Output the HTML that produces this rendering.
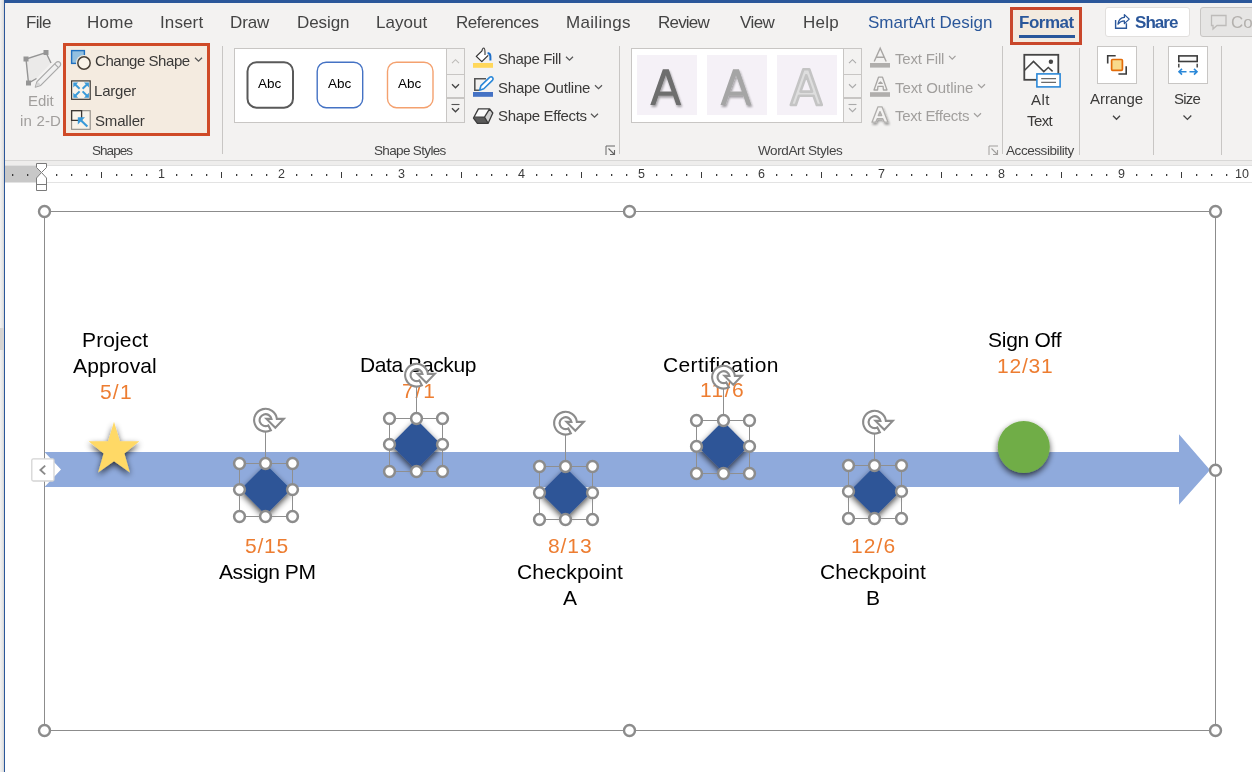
<!DOCTYPE html>
<html><head><meta charset="utf-8">
<style>
*{margin:0;padding:0;box-sizing:border-box}
html,body{width:1252px;height:772px;overflow:hidden;background:#fff;font-family:"Liberation Sans",sans-serif}
.a{position:absolute}
.t{position:absolute;white-space:nowrap;line-height:1;font-family:"Liberation Sans",sans-serif;will-change:transform}
svg{position:absolute;left:0;top:0}
</style></head><body>
<div class="a" style="left:0px;top:0px;width:4px;height:772px;background:#efefef;background:linear-gradient(to right,#f2f2f2,#e6e6e6 60%,#d4d4d4)"></div>
<div class="a" style="left:0px;top:328px;width:4px;height:22px;background:#d6d4d2;"></div>
<div class="a" style="left:5px;top:3px;width:1247px;height:157px;background:#f3f2f1;"></div>
<div class="a" style="left:4px;top:0px;width:1248px;height:3px;background:#2b579a;"></div>
<div class="a" style="left:4px;top:0px;width:1px;height:772px;background:#2b579a;"></div>
<div class="t" style="left:25.50px;top:13.55px;font-size:17px;color:#444;font-weight:normal;letter-spacing:-0.646px">File</div>
<div class="t" style="left:86.60px;top:13.55px;font-size:17px;color:#444;font-weight:normal;letter-spacing:0.302px">Home</div>
<div class="t" style="left:160.10px;top:13.55px;font-size:17px;color:#444;font-weight:normal;letter-spacing:0.121px">Insert</div>
<div class="t" style="left:230.00px;top:13.55px;font-size:17px;color:#444;font-weight:normal;letter-spacing:-0.098px">Draw</div>
<div class="t" style="left:297.20px;top:13.55px;font-size:17px;color:#444;font-weight:normal;letter-spacing:-0.093px">Design</div>
<div class="t" style="left:376.20px;top:13.55px;font-size:17px;color:#444;font-weight:normal;letter-spacing:0.016px">Layout</div>
<div class="t" style="left:456.30px;top:13.55px;font-size:17px;color:#444;font-weight:normal;letter-spacing:-0.448px">References</div>
<div class="t" style="left:566.00px;top:13.55px;font-size:17px;color:#444;font-weight:normal;letter-spacing:0.306px">Mailings</div>
<div class="t" style="left:658.30px;top:13.55px;font-size:17px;color:#444;font-weight:normal;letter-spacing:-0.793px">Review</div>
<div class="t" style="left:740.40px;top:13.55px;font-size:17px;color:#444;font-weight:normal;letter-spacing:-0.588px">View</div>
<div class="t" style="left:803.20px;top:13.55px;font-size:17px;color:#444;font-weight:normal;letter-spacing:0.231px">Help</div>
<div class="t" style="left:867.60px;top:13.55px;font-size:17px;color:#2b579a;font-weight:normal;letter-spacing:-0.025px">SmartArt Design</div>
<div class="a" style="left:1010px;top:7px;width:72px;height:38px;border:3px solid #c9472b;background:#f3eadf"></div>
<div class="t" style="left:1018.50px;top:13.55px;font-size:17px;color:#2b579a;font-weight:bold;letter-spacing:-0.491px">Format</div>
<div class="a" style="left:1019px;top:35px;width:56px;height:3px;background:#2b579a;"></div>
<div class="a" style="left:1105px;top:7px;width:85px;height:30px;border:1px solid #e1dfdd;border-radius:3px;background:#fff"></div>
<div class="t" style="left:1135.00px;top:13.55px;font-size:17px;color:#2b579a;font-weight:bold;letter-spacing:-0.948px">Share</div>
<div class="a" style="left:1200px;top:7px;width:60px;height:30px;border:1px solid #c8c6c4;border-radius:3px;background:#e6e5e4"></div>
<div class="t" style="left:1230.50px;top:13.55px;font-size:17px;color:#b3b0ad;font-weight:normal;letter-spacing:0.000px">Co</div>
<svg width="1252" height="772" style="position:absolute;left:0;top:0"><line x1="222.5" y1="46" x2="222.5" y2="154" stroke="#c8c6c4" stroke-width="1"/><line x1="619.5" y1="46" x2="619.5" y2="154" stroke="#c8c6c4" stroke-width="1"/><line x1="1002.5" y1="46" x2="1002.5" y2="154" stroke="#c8c6c4" stroke-width="1"/><line x1="1079.5" y1="48" x2="1079.5" y2="155" stroke="#c8c6c4" stroke-width="1"/><line x1="1153.5" y1="46" x2="1153.5" y2="155" stroke="#c8c6c4" stroke-width="1"/><line x1="1221.5" y1="46" x2="1221.5" y2="155" stroke="#c8c6c4" stroke-width="1"/><polygon points="26,59 46,52.5 51,63 36.5,78.5 28.5,83" fill="#ebeae9"/><polyline points="51,63 46,52.5 26,59 28.5,83 36.5,78.5" fill="none" stroke="#959595" stroke-width="1.4"/><rect x="23.5" y="56.5" width="5" height="5" fill="#959595"/><rect x="43.5" y="50.0" width="5" height="5" fill="#959595"/><rect x="26.0" y="80.5" width="5" height="5" fill="#959595"/><path d="M35.3,87.1 L37,81.6 L56.2,62.4 A2.6,2.6 0 0 1 59.9,66.1 L40.7,85.4 Z" fill="#f0f0f0" stroke="#a8a8a8" stroke-width="1.2" stroke-linejoin="round"/><path d="M54.7,63.9 L58.4,67.6" stroke="#a8a8a8" stroke-width="1.1"/><path d="M35.6,86.8 L37.2,82 Q39.8,82.6 40.4,85.2 Z" fill="#d6d6d6"/><rect x="64.5" y="44.5" width="144" height="90" fill="#f4ebe0" stroke="#cf4a27" stroke-width="3"/><rect x="71.6" y="50.6" width="12.8" height="12.8" fill="#93c0e0" stroke="#1f6fbf" stroke-width="1.4"/><circle cx="84" cy="63" r="8" fill="#f4ebe0"/><circle cx="84" cy="63" r="6.2" fill="#faf4ea" stroke="#4a4238" stroke-width="1.5"/><polyline points="195,57.75 198.5,61.25 202,57.75" fill="none" stroke="#555" stroke-width="1.2"/><rect x="71.6" y="80.9" width="18.6" height="18.4" fill="#f9f3ea" stroke="#3c3835" stroke-width="1.2"/><path d="M73.3,82.5 H78.2 L73.3,87.4 Z M88.9,82.5 H84 L88.9,87.4 Z M73.3,97.7 H78.2 L73.3,92.8 Z M88.9,97.7 H84 L88.9,92.8 Z" fill="#3a9ad9"/><path d="M75,84.2 L79.6,88.8 M87.2,84.2 L82.6,88.8 M75,96 L79.6,91.4 M87.2,96 L82.6,91.4" stroke="#3a9ad9" stroke-width="2"/><rect x="71.6" y="110.7" width="18.6" height="18.6" fill="#f9f3ea" stroke="#8f8a85" stroke-width="1.1"/><path d="M71.6,120.3 H81.6 V110.7 H71.6 Z" fill="none" stroke="#3c3835" stroke-width="1.3"/><path d="M77.8,117.2 H85 L77.8,124.4 Z" fill="#3a9ad9"/><line x1="80" y1="119.4" x2="87.4" y2="126.6" stroke="#3a9ad9" stroke-width="2.1"/><rect x="234.5" y="48.5" width="230" height="74" fill="#fff" stroke="#c8c6c4" stroke-width="1"/><rect x="446.5" y="48.5" width="18" height="74" fill="#f3f2f1" stroke="#c8c6c4" stroke-width="1"/><rect x="446.5" y="74.5" width="18" height="23" fill="#f3f2f1" stroke="#c8c6c4" stroke-width="1"/><rect x="446.5" y="98.5" width="18" height="24" fill="#f3f2f1" stroke="#c8c6c4" stroke-width="1"/><polyline points="452,63.2 455.5,59.7 459,63.2" fill="none" stroke="#bdbbb9" stroke-width="1.1"/><polyline points="452,84.25 455.5,87.75 459,84.25" fill="none" stroke="#444" stroke-width="1.3"/><line x1="451.5" y1="104.5" x2="459.5" y2="104.5" stroke="#555" stroke-width="1.1"/><polyline points="452,108.25 455.5,111.75 459,108.25" fill="none" stroke="#444" stroke-width="1.3"/><rect x="247.5" y="62.2" width="45.5" height="45.5" rx="9" fill="#fff" stroke="#595959" stroke-width="2"/><rect x="317.2" y="62.2" width="45.5" height="45.5" rx="9" fill="#fff" stroke="#4472c4" stroke-width="1.4"/><rect x="387.5" y="62.2" width="45.5" height="45.5" rx="9" fill="#fff" stroke="#f4a16f" stroke-width="1.4"/><path d="M482,51 L488.2,55.4 L481.8,61.6 L476.3,56.4 Z" fill="#fff"/><path d="M482,50.9 L476.3,56.4 L481.8,61.6 L488.2,55.4" fill="none" stroke="#333" stroke-width="1.3" stroke-linejoin="round"/><path d="M482,51 Q482.3,48 483.8,48 Q485.2,48.2 485,55" fill="none" stroke="#444" stroke-width="1.2"/><path d="M487.6,52.9 Q490.4,53.2 490.4,56.5 L490.4,60.5" fill="none" stroke="#1e6fc9" stroke-width="2"/><rect x="473" y="63" width="20" height="4.8" fill="#ffd75a"/><path d="M486,78.8 H474.8 V90.2 H480" fill="none" stroke="#555" stroke-width="1.6"/><path d="M479.6,90.2 L481,85.6 L489.6,77.4 Q491.2,76 492.6,77.6 Q493.8,79 492.4,80.4 L483.8,88.8 Z" fill="#fff" stroke="#2b88d8" stroke-width="1.6" stroke-linejoin="round"/><rect x="473" y="92" width="20" height="4.8" fill="#4472c4"/><path d="M478.4,108.9 H489.6 L484.5,116.9 H473.8 Z" fill="#fafafa"/><path d="M473.6,117.6 L484.5,116.9 L488.2,123.3 H477.4 Z" fill="#5a5a5a"/><path d="M484.5,116.9 L489.6,108.9 L492.8,113 L488.2,123.3 Z" fill="#cfcfcf"/><path d="M473.5,118 L478.4,108.9 H489.6 L492.8,113 L488.2,123.3 H477.4 Z M473.8,117.2 H484.5 L489.6,108.9 M484.5,117.2 L488.2,123.3" fill="none" stroke="#3c3c3c" stroke-width="1.3" stroke-linejoin="round"/><polyline points="566,56.75 569.5,60.25 573,56.75" fill="none" stroke="#555" stroke-width="1.2"/><polyline points="595,85.25 598.5,88.75 602,85.25" fill="none" stroke="#555" stroke-width="1.2"/><polyline points="591,113.75 594.5,117.25 598,113.75" fill="none" stroke="#555" stroke-width="1.2"/><path d="M606.0,155.0 V146.0 H615.0" fill="none" stroke="#666" stroke-width="1"/><path d="M608.5,148.5 L614.5,154.5 M614.5,150.0 V154.5 H610.0" fill="none" stroke="#666" stroke-width="1.1"/><rect x="631.5" y="48.5" width="230" height="74" fill="#fff" stroke="#c8c6c4" stroke-width="1"/><rect x="843.5" y="48.5" width="18" height="74" fill="#f3f2f1" stroke="#c8c6c4" stroke-width="1"/><rect x="843.5" y="74.5" width="18" height="23" fill="#f3f2f1" stroke="#c8c6c4" stroke-width="1"/><rect x="843.5" y="98.5" width="18" height="24" fill="#f3f2f1" stroke="#c8c6c4" stroke-width="1"/><polyline points="849,63.2 852.5,59.7 856,63.2" fill="none" stroke="#aaa" stroke-width="1.1"/><polyline points="849,84.25 852.5,87.75 856,84.25" fill="none" stroke="#aaa" stroke-width="1.1"/><line x1="848.5" y1="104.5" x2="856.5" y2="104.5" stroke="#aaa" stroke-width="1.1"/><polyline points="849,108.25 852.5,111.75 856,108.25" fill="none" stroke="#aaa" stroke-width="1.1"/><rect x="637" y="55" width="60" height="60" fill="#f5f1f7"/><rect x="707" y="55" width="60" height="60" fill="#f5f1f7"/><rect x="777" y="55" width="60" height="60" fill="#f5f1f7"/><defs><filter id="ash" x="-30%" y="-30%" width="160%" height="160%"><feGaussianBlur in="SourceAlpha" stdDeviation="1.2"/><feOffset dx="0.5" dy="1.5" result="b"/><feComponentTransfer><feFuncA type="linear" slope="0.35"/></feComponentTransfer><feMerge><feMergeNode/><feMergeNode in="SourceGraphic"/></feMerge></filter></defs><path d="M650.3,105 L662.8499999999999,69.3 H668.75 L681.3,105 H676.3 L673.05,95.8 H658.5 L655.3,105 Z M659.9499999999999,91.6 H671.5999999999999 L665.8,75.3 Z" fill="#6e6e6e" fill-rule="evenodd" filter="url(#ash)"/><path d="M720.5,105 L733.05,69.3 H738.95 L751.5,105 H746.5 L743.25,95.8 H728.7 L725.5,105 Z M730.15,91.6 H741.8 L736,75.3 Z" fill="#a5a5a5" fill-rule="evenodd" filter="url(#ash)"/><path d="M790.8,105 L803.3499999999999,69.3 H809.25 L821.8,105 H816.8 L813.55,95.8 H799.0 L795.8,105 Z M800.4499999999999,91.6 H812.0999999999999 L806.3,75.3 Z" fill="#dedede" stroke="#c4c4c4" stroke-width="2.6" stroke-linejoin="round" fill-rule="evenodd"/><path d="M874.2,61.5 L880.2,48.2 L886.2,61.5 M876.6,57.3 H883.8000000000001" fill="none" stroke="#a8a6a4" stroke-width="1.4"/><rect x="870" y="63" width="20" height="4.6" fill="#b0aeac"/><path d="M874.0,90 L878.5,77.2 H882.5 L887.0,90 H883.4 L883.1,86.4 H877.9 L877.6,90 Z M878.8,83.4 H882.2 L880.5,82.0 Z" fill="#f3f2f1" stroke="#a8a6a4" stroke-width="1.3" fill-rule="evenodd" stroke-linejoin="round"/><rect x="870" y="92.2" width="20" height="4.6" fill="#b0aeac"/><g filter="url(#ash)"><path d="M872,122.2 L878,106.8 H882 L888,122.2 H884.4 L882.6,118.60000000000001 H877.4 L875.6,122.2 Z M878.3,115.60000000000001 H881.7 L880,111.6 Z" fill="#f3f2f1" stroke="#b0aeac" stroke-width="1.3" fill-rule="evenodd" stroke-linejoin="round"/></g><polyline points="949,55.875 952.25,59.125 955.5,55.875" fill="none" stroke="#a19f9d" stroke-width="1.2"/><polyline points="978,84.25 981.5,87.75 985,84.25" fill="none" stroke="#a19f9d" stroke-width="1.2"/><polyline points="974,113.25 977.5,116.75 981,113.25" fill="none" stroke="#a19f9d" stroke-width="1.2"/><path d="M989.0,155.0 V146.0 H998.0" fill="none" stroke="#a19f9d" stroke-width="1"/><path d="M991.5,148.5 L997.5,154.5 M997.5,150.0 V154.5 H993.0" fill="none" stroke="#a19f9d" stroke-width="1.1"/><rect x="1024.3" y="54.8" width="34" height="25" fill="#fcfcfc" stroke="#454545" stroke-width="1.8"/><polyline points="1024.4,70.5 1033.5,61.4 1043.8,71.6 1048.3,67.5 1052.6,71.4" fill="none" stroke="#454545" stroke-width="1.5"/><circle cx="1050.9" cy="61.7" r="2.2" fill="#454545"/><rect x="1036.9" y="73.9" width="23.2" height="13" fill="#fff" stroke="#2b88d8" stroke-width="1.6"/><path d="M1041.2,78.6 H1056 M1041.2,82.3 H1056" stroke="#6a6a6a" stroke-width="1.2"/><rect x="1097.5" y="46.5" width="39" height="37" fill="#fff" stroke="#c8c6c4" stroke-width="1"/><path d="M1107.7,63.5 V55.7 H1115.7" fill="none" stroke="#3c3c3c" stroke-width="1.6"/><path d="M1118.4,74 H1126.2 V66.2" fill="none" stroke="#3c3c3c" stroke-width="1.6"/><rect x="1111.6" y="59.5" width="10.8" height="10.8" rx="1" fill="#f8d98b" stroke="#e36c09" stroke-width="1.7"/><polyline points="1113,115.75 1116.5,119.25 1120,115.75" fill="none" stroke="#444" stroke-width="1.3"/><rect x="1168.5" y="46.5" width="39" height="37" fill="#fff" stroke="#c8c6c4" stroke-width="1"/><rect x="1178.8" y="55.9" width="18.4" height="5.6" fill="#fafafa" stroke="#3c3c3c" stroke-width="1.6"/><path d="M1178.8,63.7 V67.4 M1197.2,63.7 V67.4" stroke="#3c3c3c" stroke-width="1.4"/><path d="M1179,71.7 H1186.5 M1189.5,71.7 H1197 M1182,68.8 L1179,71.7 L1182,74.6 M1194,68.8 L1197,71.7 L1194,74.6" fill="none" stroke="#2b88d8" stroke-width="1.6"/><polyline points="1183.5,115.55000000000001 1187.4,119.44999999999999 1191.3,115.55000000000001" fill="none" stroke="#444" stroke-width="1.3"/><path d="M1115.6,20 V28.3 H1126.4 V23.2" fill="none" stroke="#2b579a" stroke-width="1.4"/><path d="M1118,24.2 Q1118.8,17.6 1124.4,17.4 V14.6 L1129.2,19.1 L1124.4,23.6 V20.9 Q1120.5,20.8 1118,24.2 Z" fill="#fff" stroke="#2b579a" stroke-width="1.3" stroke-linejoin="round"/><path d="M1211.5,15.5 H1226 V25.5 H1217 L1213,29 V25.5 H1211.5 Z" fill="none" stroke="#bdbbb9" stroke-width="1.3"/></svg>
<div class="t" style="left:27.50px;top:93.25px;font-size:15px;color:#a19f9d;font-weight:normal;letter-spacing:-0.060px">Edit</div>
<div class="t" style="left:19.50px;top:113.05px;font-size:15px;color:#a19f9d;font-weight:normal;letter-spacing:0.184px">in 2-D</div>
<div class="t" style="left:95.20px;top:52.75px;font-size:15px;color:#3b3a39;font-weight:normal;letter-spacing:-0.449px">Change Shape</div>
<div class="t" style="left:94.20px;top:83.15px;font-size:15px;color:#3b3a39;font-weight:normal;letter-spacing:-0.213px">Larger</div>
<div class="t" style="left:95.20px;top:113.05px;font-size:15px;color:#3b3a39;font-weight:normal;letter-spacing:-0.175px">Smaller</div>
<div class="t" style="left:92.20px;top:143.83px;font-size:13.5px;color:#444;font-weight:normal;letter-spacing:-0.947px">Shapes</div>
<div class="t" style="left:258.24px;top:77.03px;font-size:13.5px;color:#000;font-weight:normal;letter-spacing:0.000px">Abc</div>
<div class="t" style="left:328.24px;top:77.03px;font-size:13.5px;color:#000;font-weight:normal;letter-spacing:0.000px">Abc</div>
<div class="t" style="left:398.24px;top:77.03px;font-size:13.5px;color:#000;font-weight:normal;letter-spacing:0.000px">Abc</div>
<div class="t" style="left:497.50px;top:51.25px;font-size:15px;color:#3b3a39;font-weight:normal;letter-spacing:-0.385px">Shape Fill</div>
<div class="t" style="left:497.50px;top:79.85px;font-size:15px;color:#3b3a39;font-weight:normal;letter-spacing:-0.227px">Shape Outline</div>
<div class="t" style="left:497.50px;top:108.25px;font-size:15px;color:#3b3a39;font-weight:normal;letter-spacing:-0.343px">Shape Effects</div>
<div class="t" style="left:374.00px;top:144.03px;font-size:13.5px;color:#444;font-weight:normal;letter-spacing:-0.655px">Shape Styles</div>
<div class="t" style="left:758.20px;top:144.03px;font-size:13.5px;color:#444;font-weight:normal;letter-spacing:-0.386px">WordArt Styles</div>
<div class="t" style="left:894.50px;top:51.15px;font-size:15px;color:#a19f9d;font-weight:normal;letter-spacing:-0.176px">Text Fill</div>
<div class="t" style="left:894.50px;top:79.85px;font-size:15px;color:#a19f9d;font-weight:normal;letter-spacing:-0.087px">Text Outline</div>
<div class="t" style="left:894.50px;top:108.25px;font-size:15px;color:#a19f9d;font-weight:normal;letter-spacing:-0.260px">Text Effects</div>
<div class="t" style="left:1030.90px;top:92.45px;font-size:15px;color:#3b3a39;font-weight:normal;letter-spacing:0.481px">Alt</div>
<div class="t" style="left:1027.20px;top:112.65px;font-size:15px;color:#3b3a39;font-weight:normal;letter-spacing:-0.581px">Text</div>
<div class="t" style="left:1006.40px;top:143.53px;font-size:13.5px;color:#444;font-weight:normal;letter-spacing:-0.431px">Accessibility</div>
<div class="t" style="left:1090.00px;top:91.25px;font-size:15px;color:#3b3a39;font-weight:normal;letter-spacing:-0.054px">Arrange</div>
<div class="t" style="left:1174.10px;top:91.25px;font-size:15px;color:#3b3a39;font-weight:normal;letter-spacing:-0.812px">Size</div>
<div class="a" style="left:5px;top:160px;width:1247px;height:1px;background:#d8d7d6;"></div>
<div class="a" style="left:5px;top:161px;width:1247px;height:4px;background:#eeedec;"></div>
<div class="a" style="left:5px;top:165px;width:1247px;height:1px;background:#e0e0e0;"></div>
<div class="a" style="left:5px;top:166px;width:1247px;height:16px;background:#fff;"></div>
<div class="a" style="left:5px;top:166px;width:36px;height:16px;background:#c8c8c8;"></div>
<div class="a" style="left:5px;top:182px;width:1247px;height:1px;background:#e3e3e3;"></div>
<svg width="1252" height="772" style="position:absolute;left:0;top:0"><path d="M36.5,163.5 H46.5 V167.5 L41.5,172.5 L36.5,167.5 Z" fill="#fff" stroke="#7a7a7a" stroke-width="1"/><path d="M41.5,172.5 L46.5,178 V190.5 H36.5 V178 Z M36.5,184.5 H46.5" fill="#fff" stroke="#7a7a7a" stroke-width="1"/><rect x="12" y="174" width="1.3" height="2" fill="#3a3a3a"/><rect x="27" y="174" width="1.3" height="2" fill="#3a3a3a"/><rect x="56" y="174" width="1.3" height="2" fill="#3a3a3a"/><rect x="71" y="174" width="1.3" height="2" fill="#3a3a3a"/><rect x="86" y="174" width="1.3" height="2" fill="#3a3a3a"/><rect x="101" y="172" width="1" height="6" fill="#3a3a3a"/><rect x="116" y="174" width="1.3" height="2" fill="#3a3a3a"/><rect x="131" y="174" width="1.3" height="2" fill="#3a3a3a"/><rect x="146" y="174" width="1.3" height="2" fill="#3a3a3a"/><rect x="176" y="174" width="1.3" height="2" fill="#3a3a3a"/><rect x="191" y="174" width="1.3" height="2" fill="#3a3a3a"/><rect x="206" y="174" width="1.3" height="2" fill="#3a3a3a"/><rect x="221" y="172" width="1" height="6" fill="#3a3a3a"/><rect x="236" y="174" width="1.3" height="2" fill="#3a3a3a"/><rect x="251" y="174" width="1.3" height="2" fill="#3a3a3a"/><rect x="266" y="174" width="1.3" height="2" fill="#3a3a3a"/><rect x="296" y="174" width="1.3" height="2" fill="#3a3a3a"/><rect x="311" y="174" width="1.3" height="2" fill="#3a3a3a"/><rect x="326" y="174" width="1.3" height="2" fill="#3a3a3a"/><rect x="341" y="172" width="1" height="6" fill="#3a3a3a"/><rect x="356" y="174" width="1.3" height="2" fill="#3a3a3a"/><rect x="371" y="174" width="1.3" height="2" fill="#3a3a3a"/><rect x="386" y="174" width="1.3" height="2" fill="#3a3a3a"/><rect x="416" y="174" width="1.3" height="2" fill="#3a3a3a"/><rect x="431" y="174" width="1.3" height="2" fill="#3a3a3a"/><rect x="446" y="174" width="1.3" height="2" fill="#3a3a3a"/><rect x="461" y="172" width="1" height="6" fill="#3a3a3a"/><rect x="476" y="174" width="1.3" height="2" fill="#3a3a3a"/><rect x="491" y="174" width="1.3" height="2" fill="#3a3a3a"/><rect x="506" y="174" width="1.3" height="2" fill="#3a3a3a"/><rect x="536" y="174" width="1.3" height="2" fill="#3a3a3a"/><rect x="551" y="174" width="1.3" height="2" fill="#3a3a3a"/><rect x="566" y="174" width="1.3" height="2" fill="#3a3a3a"/><rect x="581" y="172" width="1" height="6" fill="#3a3a3a"/><rect x="596" y="174" width="1.3" height="2" fill="#3a3a3a"/><rect x="611" y="174" width="1.3" height="2" fill="#3a3a3a"/><rect x="626" y="174" width="1.3" height="2" fill="#3a3a3a"/><rect x="656" y="174" width="1.3" height="2" fill="#3a3a3a"/><rect x="671" y="174" width="1.3" height="2" fill="#3a3a3a"/><rect x="686" y="174" width="1.3" height="2" fill="#3a3a3a"/><rect x="701" y="172" width="1" height="6" fill="#3a3a3a"/><rect x="716" y="174" width="1.3" height="2" fill="#3a3a3a"/><rect x="731" y="174" width="1.3" height="2" fill="#3a3a3a"/><rect x="746" y="174" width="1.3" height="2" fill="#3a3a3a"/><rect x="776" y="174" width="1.3" height="2" fill="#3a3a3a"/><rect x="791" y="174" width="1.3" height="2" fill="#3a3a3a"/><rect x="806" y="174" width="1.3" height="2" fill="#3a3a3a"/><rect x="821" y="172" width="1" height="6" fill="#3a3a3a"/><rect x="836" y="174" width="1.3" height="2" fill="#3a3a3a"/><rect x="851" y="174" width="1.3" height="2" fill="#3a3a3a"/><rect x="866" y="174" width="1.3" height="2" fill="#3a3a3a"/><rect x="896" y="174" width="1.3" height="2" fill="#3a3a3a"/><rect x="911" y="174" width="1.3" height="2" fill="#3a3a3a"/><rect x="926" y="174" width="1.3" height="2" fill="#3a3a3a"/><rect x="941" y="172" width="1" height="6" fill="#3a3a3a"/><rect x="956" y="174" width="1.3" height="2" fill="#3a3a3a"/><rect x="971" y="174" width="1.3" height="2" fill="#3a3a3a"/><rect x="986" y="174" width="1.3" height="2" fill="#3a3a3a"/><rect x="1016" y="174" width="1.3" height="2" fill="#3a3a3a"/><rect x="1031" y="174" width="1.3" height="2" fill="#3a3a3a"/><rect x="1046" y="174" width="1.3" height="2" fill="#3a3a3a"/><rect x="1061" y="172" width="1" height="6" fill="#3a3a3a"/><rect x="1076" y="174" width="1.3" height="2" fill="#3a3a3a"/><rect x="1091" y="174" width="1.3" height="2" fill="#3a3a3a"/><rect x="1106" y="174" width="1.3" height="2" fill="#3a3a3a"/><rect x="1136" y="174" width="1.3" height="2" fill="#3a3a3a"/><rect x="1151" y="174" width="1.3" height="2" fill="#3a3a3a"/><rect x="1166" y="174" width="1.3" height="2" fill="#3a3a3a"/><rect x="1181" y="172" width="1" height="6" fill="#3a3a3a"/><rect x="1196" y="174" width="1.3" height="2" fill="#3a3a3a"/><rect x="1211" y="174" width="1.3" height="2" fill="#3a3a3a"/><rect x="1226" y="174" width="1.3" height="2" fill="#3a3a3a"/></svg>
<div class="t" style="left:158.00px;top:168.38px;font-size:12.5px;color:#3a3a3a;font-weight:normal;letter-spacing:0.000px">1</div>
<div class="t" style="left:278.00px;top:168.38px;font-size:12.5px;color:#3a3a3a;font-weight:normal;letter-spacing:0.000px">2</div>
<div class="t" style="left:398.00px;top:168.38px;font-size:12.5px;color:#3a3a3a;font-weight:normal;letter-spacing:0.000px">3</div>
<div class="t" style="left:518.00px;top:168.38px;font-size:12.5px;color:#3a3a3a;font-weight:normal;letter-spacing:0.000px">4</div>
<div class="t" style="left:638.00px;top:168.38px;font-size:12.5px;color:#3a3a3a;font-weight:normal;letter-spacing:0.000px">5</div>
<div class="t" style="left:758.00px;top:168.38px;font-size:12.5px;color:#3a3a3a;font-weight:normal;letter-spacing:0.000px">6</div>
<div class="t" style="left:878.00px;top:168.38px;font-size:12.5px;color:#3a3a3a;font-weight:normal;letter-spacing:0.000px">7</div>
<div class="t" style="left:998.00px;top:168.38px;font-size:12.5px;color:#3a3a3a;font-weight:normal;letter-spacing:0.000px">8</div>
<div class="t" style="left:1118.00px;top:168.38px;font-size:12.5px;color:#3a3a3a;font-weight:normal;letter-spacing:0.000px">9</div>
<div class="t" style="left:1234.52px;top:168.38px;font-size:12.5px;color:#3a3a3a;font-weight:normal;letter-spacing:0.000px">10</div>
<svg width="1252" height="772" style="position:absolute;left:0;top:0"><defs><filter id="sh" x="-50%" y="-50%" width="200%" height="200%"><feGaussianBlur in="SourceAlpha" stdDeviation="3.2"/><feOffset dx="0" dy="2.8" result="b"/><feComponentTransfer><feFuncA type="linear" slope="0.7"/></feComponentTransfer><feMerge><feMergeNode/><feMergeNode in="SourceGraphic"/></feMerge></filter></defs><rect x="44.5" y="211.5" width="1171" height="519" fill="none" stroke="#8c8c8c" stroke-width="1"/><path d="M44.5,452 H1179 V434.2 L1210,470 L1179,504.8 V487 H44.5 L61,469.5 Z" fill="#8faadc"/><polygon points="114,421.8 119.9,441.3 139.4,441.3 124.4,453.5 129.9,472.6 114,461.2 98.1,472.6 103.6,453.5 88.6,441.3 108.1,441.3" fill="#ffd966" filter="url(#sh)"/><circle cx="1023.8" cy="447" r="26" fill="#70ad47" filter="url(#sh)"/><polygon points="265.8,464.3 291.1,489.6 265.8,514.9 240.5,489.6" fill="#2f5597" filter="url(#sh)"/><polygon points="416,419.09999999999997 441.3,444.4 416,469.7 390.7,444.4" fill="#2f5597" filter="url(#sh)"/><polygon points="565.7,467.4 591.0,492.7 565.7,518.0 540.4000000000001,492.7" fill="#2f5597" filter="url(#sh)"/><polygon points="723,421.09999999999997 748.3,446.4 723,471.7 697.7,446.4" fill="#2f5597" filter="url(#sh)"/><polygon points="874.8,466.09999999999997 900.0999999999999,491.4 874.8,516.6999999999999 849.5,491.4" fill="#2f5597" filter="url(#sh)"/><rect x="31.8" y="458.8" width="22.2" height="22.2" rx="1.5" fill="#fff" stroke="#d4d4d4" stroke-width="1.3"/><polyline points="45.2,465.6 40.4,470 45.2,474.4" fill="none" stroke="#8a8a8a" stroke-width="1.9"/></svg>
<div class="t" style="left:81.70px;top:328.95px;font-size:21px;color:#000;font-weight:normal;letter-spacing:0.129px">Project</div>
<div class="t" style="left:73.40px;top:355.15px;font-size:21px;color:#000;font-weight:normal;letter-spacing:0.126px">Approval</div>
<div class="t" style="left:99.60px;top:380.85px;font-size:21px;color:#ed7d31;font-weight:normal;letter-spacing:1.193px">5/1</div>
<div class="t" style="left:245.30px;top:535.15px;font-size:21px;color:#ed7d31;font-weight:normal;letter-spacing:0.802px">5/15</div>
<div class="t" style="left:218.60px;top:561.05px;font-size:21px;color:#000;font-weight:normal;letter-spacing:-0.434px">Assign PM</div>
<div class="t" style="left:360.20px;top:353.95px;font-size:21px;color:#000;font-weight:normal;letter-spacing:-0.376px">Data Backup</div>
<div class="t" style="left:401.60px;top:380.15px;font-size:21px;color:#ed7d31;font-weight:normal;letter-spacing:1.843px">7/1</div>
<div class="t" style="left:548.05px;top:534.85px;font-size:21px;color:#ed7d31;font-weight:normal;letter-spacing:0.902px">8/13</div>
<div class="t" style="left:516.55px;top:560.75px;font-size:21px;color:#000;font-weight:normal;letter-spacing:0.075px">Checkpoint</div>
<div class="t" style="left:562.90px;top:587.05px;font-size:21px;color:#000;font-weight:normal;letter-spacing:0.000px">A</div>
<div class="t" style="left:663.45px;top:353.75px;font-size:21px;color:#000;font-weight:normal;letter-spacing:0.375px">Certification</div>
<div class="t" style="left:699.80px;top:379.45px;font-size:21px;color:#ed7d31;font-weight:normal;letter-spacing:1.455px">11/6</div>
<div class="t" style="left:851.05px;top:534.85px;font-size:21px;color:#ed7d31;font-weight:normal;letter-spacing:1.102px">12/6</div>
<div class="t" style="left:819.70px;top:560.75px;font-size:21px;color:#000;font-weight:normal;letter-spacing:0.086px">Checkpoint</div>
<div class="t" style="left:866.20px;top:587.05px;font-size:21px;color:#000;font-weight:normal;letter-spacing:0.000px">B</div>
<div class="t" style="left:987.70px;top:328.55px;font-size:21px;color:#000;font-weight:normal;letter-spacing:-0.265px">Sign Off</div>
<div class="t" style="left:996.60px;top:355.05px;font-size:21px;color:#ed7d31;font-weight:normal;letter-spacing:0.782px">12/31</div>
<svg width="1252" height="772" style="position:absolute;left:0;top:0"><rect x="239.5" y="463.5" width="53.0" height="53.0" fill="none" stroke="#8f8f8f" stroke-width="1"/><line x1="265.5" y1="431.8" x2="265.5" y2="463.5" stroke="#8f8f8f" stroke-width="1"/><circle cx="239.5" cy="463.5" r="5.4" fill="#fff" stroke="#8c8c8c" stroke-width="2.5"/><circle cx="239.5" cy="489.6" r="5.4" fill="#fff" stroke="#8c8c8c" stroke-width="2.5"/><circle cx="239.5" cy="516.5" r="5.4" fill="#fff" stroke="#8c8c8c" stroke-width="2.5"/><circle cx="265.5" cy="463.5" r="5.4" fill="#fff" stroke="#8c8c8c" stroke-width="2.5"/><circle cx="265.5" cy="516.5" r="5.4" fill="#fff" stroke="#8c8c8c" stroke-width="2.5"/><circle cx="292.5" cy="463.5" r="5.4" fill="#fff" stroke="#8c8c8c" stroke-width="2.5"/><circle cx="292.5" cy="489.6" r="5.4" fill="#fff" stroke="#8c8c8c" stroke-width="2.5"/><circle cx="292.5" cy="516.5" r="5.4" fill="#fff" stroke="#8c8c8c" stroke-width="2.5"/><path d="M270.85,430.27 A11.4,11.4 0 1 1 276.86,418.90 L283.80,418.90 L275.30,427.80 L266.50,418.90 L271.48,418.90 A6.0,6.0 0 1 0 268.32,425.50 Z" fill="#fff" stroke="#8c8c8c" stroke-width="2.1" stroke-linejoin="miter"/><rect x="389.5" y="418.5" width="53.0" height="53.0" fill="none" stroke="#8f8f8f" stroke-width="1"/><line x1="416.5" y1="386.8" x2="416.5" y2="418.5" stroke="#8f8f8f" stroke-width="1"/><circle cx="389.5" cy="418.5" r="5.4" fill="#fff" stroke="#8c8c8c" stroke-width="2.5"/><circle cx="389.5" cy="444.4" r="5.4" fill="#fff" stroke="#8c8c8c" stroke-width="2.5"/><circle cx="389.5" cy="471.5" r="5.4" fill="#fff" stroke="#8c8c8c" stroke-width="2.5"/><circle cx="416.5" cy="418.5" r="5.4" fill="#fff" stroke="#8c8c8c" stroke-width="2.5"/><circle cx="416.5" cy="471.5" r="5.4" fill="#fff" stroke="#8c8c8c" stroke-width="2.5"/><circle cx="442.5" cy="418.5" r="5.4" fill="#fff" stroke="#8c8c8c" stroke-width="2.5"/><circle cx="442.5" cy="444.4" r="5.4" fill="#fff" stroke="#8c8c8c" stroke-width="2.5"/><circle cx="442.5" cy="471.5" r="5.4" fill="#fff" stroke="#8c8c8c" stroke-width="2.5"/><path d="M421.85,385.27 A11.4,11.4 0 1 1 427.86,373.90 L434.80,373.90 L426.30,382.80 L417.50,373.90 L422.48,373.90 A6.0,6.0 0 1 0 419.32,380.50 Z" fill="#fff" stroke="#8c8c8c" stroke-width="2.1" stroke-linejoin="miter"/><rect x="539.5" y="466.5" width="53.0" height="53.0" fill="none" stroke="#8f8f8f" stroke-width="1"/><line x1="565.5" y1="434.8" x2="565.5" y2="466.5" stroke="#8f8f8f" stroke-width="1"/><circle cx="539.5" cy="466.5" r="5.4" fill="#fff" stroke="#8c8c8c" stroke-width="2.5"/><circle cx="539.5" cy="492.7" r="5.4" fill="#fff" stroke="#8c8c8c" stroke-width="2.5"/><circle cx="539.5" cy="519.5" r="5.4" fill="#fff" stroke="#8c8c8c" stroke-width="2.5"/><circle cx="565.5" cy="466.5" r="5.4" fill="#fff" stroke="#8c8c8c" stroke-width="2.5"/><circle cx="565.5" cy="519.5" r="5.4" fill="#fff" stroke="#8c8c8c" stroke-width="2.5"/><circle cx="592.5" cy="466.5" r="5.4" fill="#fff" stroke="#8c8c8c" stroke-width="2.5"/><circle cx="592.5" cy="492.7" r="5.4" fill="#fff" stroke="#8c8c8c" stroke-width="2.5"/><circle cx="592.5" cy="519.5" r="5.4" fill="#fff" stroke="#8c8c8c" stroke-width="2.5"/><path d="M570.85,433.27 A11.4,11.4 0 1 1 576.86,421.90 L583.80,421.90 L575.30,430.80 L566.50,421.90 L571.48,421.90 A6.0,6.0 0 1 0 568.32,428.50 Z" fill="#fff" stroke="#8c8c8c" stroke-width="2.1" stroke-linejoin="miter"/><rect x="696.5" y="420.5" width="53.0" height="53.0" fill="none" stroke="#8f8f8f" stroke-width="1"/><line x1="723.5" y1="388.8" x2="723.5" y2="420.5" stroke="#8f8f8f" stroke-width="1"/><circle cx="696.5" cy="420.5" r="5.4" fill="#fff" stroke="#8c8c8c" stroke-width="2.5"/><circle cx="696.5" cy="446.4" r="5.4" fill="#fff" stroke="#8c8c8c" stroke-width="2.5"/><circle cx="696.5" cy="473.5" r="5.4" fill="#fff" stroke="#8c8c8c" stroke-width="2.5"/><circle cx="723.5" cy="420.5" r="5.4" fill="#fff" stroke="#8c8c8c" stroke-width="2.5"/><circle cx="723.5" cy="473.5" r="5.4" fill="#fff" stroke="#8c8c8c" stroke-width="2.5"/><circle cx="749.5" cy="420.5" r="5.4" fill="#fff" stroke="#8c8c8c" stroke-width="2.5"/><circle cx="749.5" cy="446.4" r="5.4" fill="#fff" stroke="#8c8c8c" stroke-width="2.5"/><circle cx="749.5" cy="473.5" r="5.4" fill="#fff" stroke="#8c8c8c" stroke-width="2.5"/><path d="M728.85,387.27 A11.4,11.4 0 1 1 734.86,375.90 L741.80,375.90 L733.30,384.80 L724.50,375.90 L729.48,375.90 A6.0,6.0 0 1 0 726.32,382.50 Z" fill="#fff" stroke="#8c8c8c" stroke-width="2.1" stroke-linejoin="miter"/><rect x="848.5" y="465.5" width="53.0" height="53.0" fill="none" stroke="#8f8f8f" stroke-width="1"/><line x1="874.5" y1="433.8" x2="874.5" y2="465.5" stroke="#8f8f8f" stroke-width="1"/><circle cx="848.5" cy="465.5" r="5.4" fill="#fff" stroke="#8c8c8c" stroke-width="2.5"/><circle cx="848.5" cy="491.4" r="5.4" fill="#fff" stroke="#8c8c8c" stroke-width="2.5"/><circle cx="848.5" cy="518.5" r="5.4" fill="#fff" stroke="#8c8c8c" stroke-width="2.5"/><circle cx="874.5" cy="465.5" r="5.4" fill="#fff" stroke="#8c8c8c" stroke-width="2.5"/><circle cx="874.5" cy="518.5" r="5.4" fill="#fff" stroke="#8c8c8c" stroke-width="2.5"/><circle cx="901.5" cy="465.5" r="5.4" fill="#fff" stroke="#8c8c8c" stroke-width="2.5"/><circle cx="901.5" cy="491.4" r="5.4" fill="#fff" stroke="#8c8c8c" stroke-width="2.5"/><circle cx="901.5" cy="518.5" r="5.4" fill="#fff" stroke="#8c8c8c" stroke-width="2.5"/><path d="M879.85,432.27 A11.4,11.4 0 1 1 885.86,420.90 L892.80,420.90 L884.30,429.80 L875.50,420.90 L880.48,420.90 A6.0,6.0 0 1 0 877.32,427.50 Z" fill="#fff" stroke="#8c8c8c" stroke-width="2.1" stroke-linejoin="miter"/><circle cx="44.5" cy="211.5" r="5.5" fill="#fff" stroke="#8c8c8c" stroke-width="2.4"/><circle cx="629.5" cy="211.5" r="5.5" fill="#fff" stroke="#8c8c8c" stroke-width="2.4"/><circle cx="1215.5" cy="211.5" r="5.5" fill="#fff" stroke="#8c8c8c" stroke-width="2.4"/><circle cx="44.5" cy="730.5" r="5.5" fill="#fff" stroke="#8c8c8c" stroke-width="2.4"/><circle cx="629.5" cy="730.5" r="5.5" fill="#fff" stroke="#8c8c8c" stroke-width="2.4"/><circle cx="1215.5" cy="730.5" r="5.5" fill="#fff" stroke="#8c8c8c" stroke-width="2.4"/><circle cx="1215.5" cy="470.3" r="5.5" fill="#fff" stroke="#8c8c8c" stroke-width="2.4"/></svg>
</body></html>
